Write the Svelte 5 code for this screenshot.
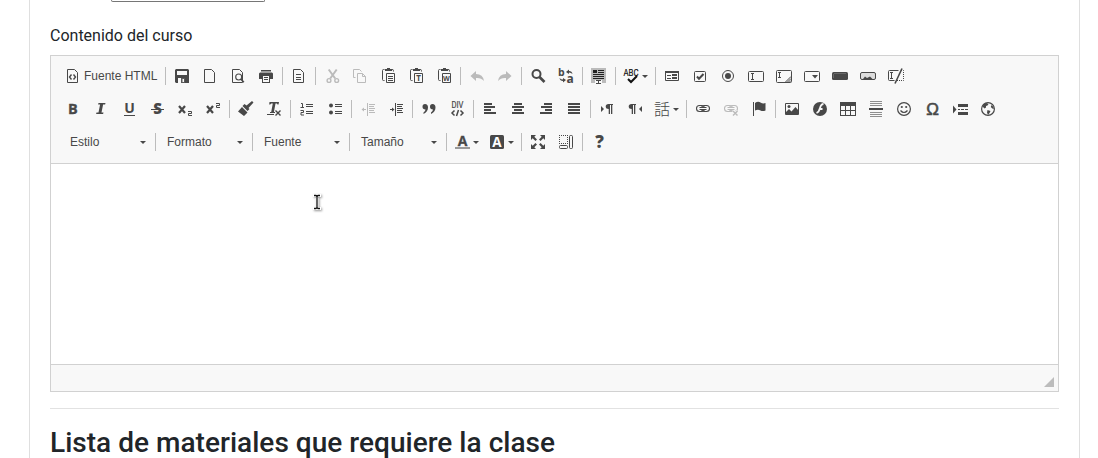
<script>
  const doc = '<path d="M2.5 1.5h7l3 3v10h-10z" fill="none" stroke="currentColor"/>';
  const clip = '<path d="M4.5 1.5h-1q-1 0-1 1v9q0 1 1 1h1M12 1.5q1.500 0 1.500 1v1" fill="none" stroke="currentColor"/><path d="M5 1h2v-1h3v1h2v2h-7z"/><path d="M6.500 5.500h8v9h-8z" fill="none" stroke="currentColor"/>';
  const sans = 'font-family="Open Sans, sans-serif"';
  const lines = (a) => `<path d="${a.map(([x, y, w, h = 1]) => `M${x} ${y}h${w}v${h}h${-w}z`).join('')}"/>`;
  const four = (xs) => lines(xs.map(([x, w], i) => [x, 2 + i * 3, w, 2]));
  const chain = '<g fill="none" stroke="currentColor" stroke-width="1.100"><rect x="1.500" y="4.500" width="8" height="6" rx="3"/><rect x="6.500" y="4.500" width="8" height="6" rx="3"/><path d="M4 7.500h8" stroke="#f8f8f8" stroke-width="3"/><path d="M4.500 6.500h7M4.500 8.500h7"/></g>';

  const icons = {
    source: doc + '<path d="M6.500 6.500l-2 2.500 2 2.500M8.500 6.500l2 2.500-2 2.500" fill="none" stroke="currentColor" stroke-width="1.400"/>',
    save: '<path d="M2 1h12l1 1v13H2l-1-1V2z"/><path d="M3 2h10v5h-10zM4 10h7v5h-7z" fill="#f8f8f8"/><path d="M7 10h4v5h-4zM3 3h10v1h-10z" opacity=".900"/><path d="M3 2h10v2h-10z"/><path d="M3 3h10v4h-10zM8.500 11h1.500v3h-1.500z" fill="#f8f8f8"/>',
    newpage: doc,
    preview: doc + '<circle cx="8.700" cy="9" r="3" fill="#f8f8f8" stroke="currentColor" stroke-width="1.100"/><path d="M10.800 11l3 3.300" stroke="currentColor" stroke-width="1.700"/>',
    print: '<path d="M3 2h10v1.500h-10zM2 4.500h12l1 1v5.500h-14v-5.500z"/><path d="M4 7h8v8h-8z"/><path d="M5 8h6v6h-6z" fill="#f8f8f8"/><path d="M6 9h4v1h-4zM6 11h4v1h-4z"/>',
    templates: doc + lines([[5, 6, 5], [5, 9, 5], [5, 11, 5]]),
    cut: '<g fill="none" stroke="currentColor" transform="translate(.7 0)"><path d="M4 1.500l6.500 9M12 1.500l-6.500 9" stroke-width="2"/><circle cx="4.300" cy="12.500" r="1.900" stroke-width="1.400"/><circle cx="12" cy="12.500" r="1.900" stroke-width="1.400"/></g>',
    copy: '<g fill="none" stroke="currentColor"><path d="M3.500 9.500h-2v-8h6l2 2"/><path d="M5.500 5.500h5l3 3v6h-8z"/><path d="M10.500 5.500v3h3" /></g>',
    paste: clip + lines([[8, 8, 5], [8, 10, 5], [8, 12, 5]]),
    pastetext: clip + `<text x="10.500" y="13" font-size="8" text-anchor="middle" font-weight="700" ${sans}>T</text>`,
    pasteword: clip + `<text x="10.500" y="13" font-size="7" text-anchor="middle" font-weight="700" ${sans}>W</text>`,
    undo: '<path d="M1.500 8l5.500-5v3q7 0 8 7q-3-3.500-8-3v3z"/>',
    redo: '<path d="M14.500 8l-5.500-5v3q-7 0-8 7q3-3.500 8-3v3z"/>',
    find: '<circle cx="6.500" cy="6" r="4" fill="none" stroke="currentColor" stroke-width="2"/><path d="M9.500 9l5 5" stroke="currentColor" stroke-width="2.600"/>',
    replace: `<text x="0" y="8" font-size="10.500" font-weight="700" ${sans}>b</text><text x="8.500" y="15" font-size="12" font-weight="700" ${sans}>a</text><path d="M8 4l3-2.500v1.500q3 0 3.500 3q-1.500-1.500-3.500-1.500v1.500zM8 12l-3 2.500v-1.500q-3 0-3.500-3q1.500 1.500 3.500 1.500v-1.500z"/>`,
    selectall: '<path d="M0 0h15v15h-15z" fill="#bbb"/><path d="M2 2h4v3h-4zM7 2h6v1h-6zM7 4h6v1h-6zM2 6h11v1h-11zM2 8h11v1h-11zM2 10h11v1h-11z" fill="#222"/><path d="M4 12h7v4h-7z" fill="#f8f8f8"/><path d="M5 12h5v1h-2v2h2v1h-5v-1h2v-2h-2z"/>',
    scayt: `<text x="-0.500" y="8" font-size="9.500" textLength="15" lengthAdjust="spacingAndGlyphs" fill="#111" stroke="#111" stroke-width=".2" font-family="Roboto, sans-serif">ABC</text><path d="M4 11l3 3 6-6" fill="none" stroke="#111" stroke-width="2"/>`,
    form: '<path d="M1.500 3.500h13v9h-13z" fill="none" stroke="currentColor"/>' + lines([[1, 3, 14, 2], [3, 7, 4], [3, 10, 4], [8, 6, 5, 2], [8, 9, 5, 2]]),
    checkbox: '<rect x="2.500" y="3.500" width="11" height="10" rx="1" fill="none" stroke="currentColor"/><path d="M5 8.500l2 2.300 4.500-4.800" fill="none" stroke="currentColor" stroke-width="2"/>',
    radio: '<circle cx="8" cy="8" r="5.500" fill="none" stroke="currentColor"/><circle cx="8" cy="8" r="3"/>',
    textfield: '<g fill="none" stroke="currentColor"><rect x=".500" y="3.500" width="15" height="10" rx="1"/><path d="M3 5.500h3M4.500 5.500v6M3 11.500h3"/></g>',
    textarea: '<g fill="none" stroke="currentColor"><rect x=".500" y="2.500" width="15" height="12" rx="1"/><path d="M2 4.500h3M3.500 4.500v5M2 9.500h3M9 14.500l6-6M11 14.500l4-4M13 14.500l2-2"/></g>',
    select: '<rect x=".500" y="3.500" width="15" height="10" rx="1" fill="none" stroke="currentColor"/><path d="M8 7h6l-3 3.500z"/>',
    button: '<rect x="0" y="4" width="16" height="8" rx="1.500"/><path d="M2 5.500h12M1.500 6v4" stroke="#777" stroke-width=".700"/>',
    imagebutton: '<rect x=".500" y="4.500" width="15" height="7" rx="1.500" fill="#ddd" stroke="currentColor"/><path d="M3 11l2-2.500 2 1.500 3-1.500 2.500 2.500z"/>',
    hidden: '<g fill="none" stroke="currentColor"><path d="M10.500 2.500h-9q-1 0-1 1v8q0 1 1 1h5"/><path d="M2 4.500h3M3.500 4.500v6M2 10.500h3"/><path d="M14 .500l-7 15" stroke-width="1.600"/><path d="M13 2.500h2.500v10h-7" stroke-dasharray="1 1"/></g>',
    bold: `<text x="3" y="13" font-size="14.500" font-weight="700" stroke="currentColor" stroke-width=".3" ${sans}>B</text>`,
    italic: '<path d="M5.500 2h7l-.400 1.500h-2l-1.600 8h2l-.400 1.500h-7l.400-1.500h2l1.600-8h-2z"/>',
    underline: `<text x="8.500" y="12" font-size="14" text-anchor="middle" font-weight="700" ${sans}>U</text><path d="M3 14h11v1h-11z"/>`,
    strike: `<text x="8.500" y="13" font-size="15" text-anchor="middle" font-weight="800" ${sans}>S</text><path d="M2 8h13v1h-13z"/>`,
    sub: '<path d="M2 5l6 7M8 5l-6 7" stroke="currentColor" stroke-width="2.200"/><path d="M11 10.500h3.500v2h-3v2h3.500" fill="none" stroke="currentColor"/>',
    sup: '<path d="M2 5l6 7M8 5l-6 7" stroke="currentColor" stroke-width="2.200"/><path d="M11 2.500h3.500v2h-3v2h3.500" fill="none" stroke="currentColor"/>',
    brush: '<path d="M14 0l1.500 1.500-5 5.500 1 1-2 2-5-5 2-2 2 1.500zM4 6l5.500 5.500-3.500 3.500-6-4.500z"/>',
    removeformat: '<path d="M3.500 1h9.500l-.500 2.500h-1l-.500-1h-1.500l-1.600 8.500h1.100v1h-5v-1h1.200l1.600-8.500h-1.600l-1 1h-1z"/><path d="M1 13.500h7" stroke="currentColor"/><path d="M9.500 9.500l5 5M14.500 9.500l-5 5" stroke="currentColor" stroke-width="1.400"/>',
    numbered: '<path d="M2 2.500h1.500v4M1.500 6.500h3.500M1.500 9.500h3v2h-2.500v2.500h3" fill="none" stroke="currentColor"/>' + lines([[7, 3, 7], [7, 5, 7], [7, 10, 7], [7, 12, 7]]),
    bulleted: '<circle cx="4" cy="4.500" r="2"/><circle cx="4" cy="11.500" r="2"/>' + lines([[8, 3, 7], [8, 5, 7], [8, 10, 7], [8, 12, 7]]),
    outdent: '<g transform="translate(1 0)">' + lines([[6, 2, 1, 13], [8, 3, 6], [8, 5, 5], [8, 7, 6], [8, 9, 5], [8, 11, 6], [2, 8, 3]]) + '<path d="M.500 8.500l2.500-2v4z"/></g>',
    indent: '<g transform="translate(1 0)">' + lines([[6, 2, 1, 13], [8, 3, 6], [8, 5, 5], [8, 7, 6], [8, 9, 5], [8, 11, 6], [1, 8, 3]]) + '<path d="M5.500 8.500l-2.500-2v4z"/></g>',
    quote: '<path d="M4 3q3 0 3 3.500q0 4-4.500 6.500v-1.500q2-1.500 2-3q-3 0-3-2.700q0-2.800 2.500-2.800zM11.500 3q3 0 3 3.500q0 4-4.500 6.500v-1.500q2-1.500 2-3q-3 0-3-2.700q0-2.800 2.500-2.800z"/>',
    div: `<text x="2.500" y="7" font-size="9" textLength="12" lengthAdjust="spacingAndGlyphs" stroke="currentColor" stroke-width=".2" font-family="Roboto, sans-serif">DIV</text><path d="M5.500 9.500l-2.500 2.500 2.500 2.500M11.500 9.500l2.500 2.500-2.500 2.500M9.500 9l-2 6" fill="none" stroke="currentColor" stroke-width="1.500"/>`,
    left: four([[2, 8], [2, 11], [2, 7], [2, 12]]),
    center: four([[4, 8], [2, 12], [4, 8], [2, 12]]),
    right: four([[6, 8], [3, 11], [7, 7], [2, 12]]),
    justify: four([[2, 12], [2, 12], [2, 12], [2, 12]]),
    ltr: '<path d="M2 5l3 3-3 3zM9.500 3h4.500v1h-.700v9h-1.300v-9h-1v9h-1.300v-5q-3 0-3-2.500q0-2.500 2.800-2.500z"/>',
    rtl: '<path d="M15 5l-3 3 3 3zM4.500 3h4.500v1h-.700v9h-1.300v-9h-1v9h-1.300v-5q-3 0-3-2.500q0-2.500 2.800-2.500z"/>',
    language: '<text x="-1" y="13.500" font-size="16" font-weight="300" font-family="Noto Sans CJK JP, sans-serif">話</text>',
    link: chain,
    unlink: chain + '<path d="M10 10l4.500 4.500M14.500 10l-4.500 4.500" stroke="#f8f8f8" stroke-width="3"/><path d="M10 10l4.500 4.500M14.500 10l-4.500 4.500" stroke="currentColor" stroke-width="1.400"/>',
    anchor: '<path d="M2 1h1v14h-1zM4 2q3-2 5.500-.500q2.500 1.500 5 .500v7.500q-3 1-5 0q-2.500-1.500-5.500 0z"/>',
    image: '<path d="M1.500 2.500h13v11h-13z" fill="none" stroke="currentColor"/><circle cx="5" cy="5.500" r="1.500"/><path d="M2 13v-2l3-3 2.500 2.500 4-4.500 3 3.500v3.500z"/>',
    flash: '<circle cx="8" cy="8" r="7"/><path d="M11.500 3q-2.500 0-3.500 4t-3.500 5M7.500 8h3" fill="none" stroke="#f8f8f8" stroke-width="1.800"/>',
    table: lines([[0, 1, 16, 4], [0, 4, 1, 11], [15, 4, 1, 11], [5, 5, 1, 10], [10, 5, 1, 10], [0, 9, 16], [0, 14, 16]]),
    hr: '<g opacity=".600">' + lines([[2, 0, 12], [2, 2, 12], [2, 4, 12], [2, 11, 12], [2, 13, 12], [2, 15, 12]]) + '</g>' + lines([[1, 7, 14, 2]]),
    smiley: '<circle cx="8" cy="8" r="6.400" fill="none" stroke="currentColor" stroke-width="1.200"/><circle cx="5.800" cy="6" r="1.100"/><circle cx="10.200" cy="6" r="1.100"/><path d="M4.500 9.500q3.500 4 7 0" fill="none" stroke="currentColor" stroke-width="1.200"/>',
    omega: '<text x="8.500" y="14" font-size="17" text-anchor="middle" stroke="currentColor" stroke-width=".600" font-family="Liberation Sans, sans-serif">Ω</text>',
    pagebreak: '<path d="M1 4.500l3.500 4-3.500 4zM6 3h10v3h-10zM6 11h10v3h-10zM6 8h2v1h-2zM9 8h3v1h-3zM13 8h3v1h-3z"/>',
    iframe: '<circle cx="8" cy="8" r="6.400" fill="none" stroke="currentColor" stroke-width="1.200"/><path d="M4 3l2.500-1 2 1-1 1.500-1.500.500v1.500l-1.500 1-2-2zM11.500 4l2 2 .300 2-1.500-.500-1.500-1.500zM7.500 9l3 1-1 2-1.500 2-1-2.500z"/>',
    textcolor: `<text x="7.500" y="11.500" font-size="14" text-anchor="middle" font-weight="700" stroke="currentColor" stroke-width=".3" ${sans}>A</text><path d="M0 13h15v2h-15z" fill="#999"/>`,
    bgcolor: `<rect x="0" y="1" width="14" height="14" rx="1.500"/><text x="7" y="13" font-size="13.500" text-anchor="middle" font-weight="700" fill="#fff" ${sans}>A</text>`,
    maximize: '<path d="M1 1h5l-1.700 1.700 2.700 2.700-1.600 1.600-2.700-2.700-1.700 1.700zM15 1h-5l1.700 1.700-2.700 2.700 1.600 1.600 2.700-2.700 1.700 1.700zM1 15h5l-1.700-1.700 2.700-2.700-1.600-1.600-2.700 2.700-1.700-1.700zM15 15h-5l1.700-1.700-2.700-2.700 1.600-1.600 2.700 2.700 1.700-1.700z"/>',
    blocks: '<g fill="none" stroke="currentColor"><path d="M1 1.500h9M1.500 3v6M9.500 3v6M1 9.500h9" stroke-dasharray="1 1"/><rect x="1.500" y="11.500" width="8" height="3" rx="1"/><rect x="11.500" y="1.500" width="3" height="13" rx="1"/></g>',
    about: `<text x="8.500" y="14" font-size="17" text-anchor="middle" font-weight="800" ${sans}>?</text>`
  };

  const b = (names) => names.split(' ').map((n) => {
    const [icon, flag] = n.split(':');
    return { icon, off: flag === 'off', menu: flag === 'menu' };
  });

  const rows = [
    [
      [{ icon: 'source', label: 'Fuente HTML' }],
      b('save newpage preview print'),
      b('templates'),
      b('cut:off copy:off paste pastetext pasteword'),
      b('undo:off redo:off'),
      b('find replace'),
      b('selectall'),
      b('scayt:menu'),
      b('form checkbox radio textfield textarea select button imagebutton hidden')
    ],
    [
      b('bold italic underline strike sub sup'),
      b('brush removeformat'),
      b('numbered bulleted'),
      b('outdent:off indent'),
      b('quote div'),
      b('left center right justify'),
      b('ltr rtl language:menu'),
      b('link unlink:off anchor'),
      b('image flash table hr smiley omega pagebreak iframe')
    ],
    [
      [{ combo: 'Estilo' }],
      [{ combo: 'Formato' }],
      [{ combo: 'Fuente' }],
      [{ combo: 'Tamaño' }],
      b('textcolor:menu bgcolor:menu'),
      b('maximize blocks'),
      b('about')
    ]
  ];
</script>

<main class="card">
  <div class="field-end"></div>
  <div class="label">Contenido del curso</div>
  <section class="editor">
    <div class="toolbox">
      {#each rows as row}
        <div class="row">
          {#each row as group}
            <div class="group">
              {#each group as item}
                {#if item.combo}
                  <div class="combo"><span>{item.combo}</span><i class="arrow"></i></div>
                {:else}
                  <div class="btn" class:off={item.off} class:menu={item.menu}>
                    <svg width="16" height="16" viewBox="0 0 16 16" fill="currentColor">{@html icons[item.icon]}</svg>
                    {#if item.label}<span class="text">{item.label}</span>{/if}
                    {#if item.menu}<i class="arrow"></i>{/if}
                  </div>
                {/if}
              {/each}
            </div>
          {/each}
        </div>
      {/each}
    </div>
    <div class="content">
      <svg class="caret" width="12" height="20" viewBox="0 0 12 20" fill="none">
        <path d="M2 3.500h3l1 1 1-1h3M6 4v12M2 16.500h3l1-1 1 1h3" stroke="#fff" stroke-width="3" />
        <path d="M3 3.500h2l1 1 1-1h2M6 4v12M3 16.500h2l1-1 1 1h2" stroke="#111" stroke-width="1.300" />
      </svg>
    </div>
    <div class="bottom"><svg width="10" height="10" viewBox="0 0 10 10"><path d="M10 0v10H0z" fill="#bcbcbc" /></svg></div>
  </section>
  <hr />
  <h3>Lista de materiales que requiere la clase</h3>
</main>

<style>
  :global(body) { margin: 0; background: #fff; overflow: hidden; }
  .card {
    box-sizing: border-box;
    width: 1051px;
    height: 458px;
    margin-left: 29px;
    padding: 0 20px;
    border: solid #dfdfdf;
    border-width: 0 1px;
    overflow: hidden;
    font-family: Roboto, sans-serif;
    color: #212529;
  }
  .field-end {
    box-sizing: border-box;
    width: 154px;
    height: 2px;
    margin-left: 61px;
    border: 1px solid #767676;
    border-top: 0;
    border-radius: 0 0 3px 3px;
  }
  .label { margin: 22px 0 7px; font-size: 16px; line-height: 24px; }
  .editor { border: 1px solid #d1d1d1; }
  .toolbox {
    display: flex;
    flex-direction: column;
    gap: 1px;
    padding: 4px 8px 5px;
    background: #f8f8f8;
    border-bottom: 1px solid #d1d1d1;
    font: 12px/16px "Liberation Sans", Arial, sans-serif;
    color: #484848;
  }
  .row { display: flex; height: 32px; align-items: center; }
  .group { display: flex; align-items: center; height: 18px; }
  .group + .group { margin-left: 2px; border-left: 1px solid #bcbcbc; padding-left: 2px; }
  .btn { box-sizing: border-box; display: flex; align-items: center; width: 28px; padding: 0 6px; white-space: nowrap; }
  .btn svg { flex: none; display: block; overflow: visible; }
  .btn:has(.text) { width: 104px; }
  .text { margin-left: 3px; }
  .btn.menu { width: 35px; }
  .btn.off { color: #bbb; }
  .arrow { flex: none; width: 0; height: 0; border: 3px solid transparent; border-top-color: #484848; border-bottom: 0; }
  .menu .arrow { margin-left: 2px; }
  .combo { box-sizing: border-box; display: flex; align-items: center; justify-content: space-between; width: 92px; padding: 0 7px 0 9px; }
  .group:first-child .combo { width: 94px; padding-left: 11px; }
  .combo .arrow { margin-top: 1px; }
  .content { position: relative; height: 200px; }
  .caret { position: absolute; left: 260px; top: 28px; filter: drop-shadow(1px 1px 1px rgba(0, 0, 0, .4)); }
  .bottom {
    box-sizing: border-box;
    display: flex;
    justify-content: flex-end;
    align-items: flex-end;
    height: 27px;
    padding: 0 4px 4px;
    border-top: 1px solid #d1d1d1;
    background: #f8f8f8;
  }
  hr { margin: 16px 0 17px; border: 0; height: 1px; background: #e2e2e2; }
  h3 { margin: 0; font-size: 28px; font-weight: 500; line-height: 33.600px; letter-spacing: .03px; white-space: nowrap; }
</style>
